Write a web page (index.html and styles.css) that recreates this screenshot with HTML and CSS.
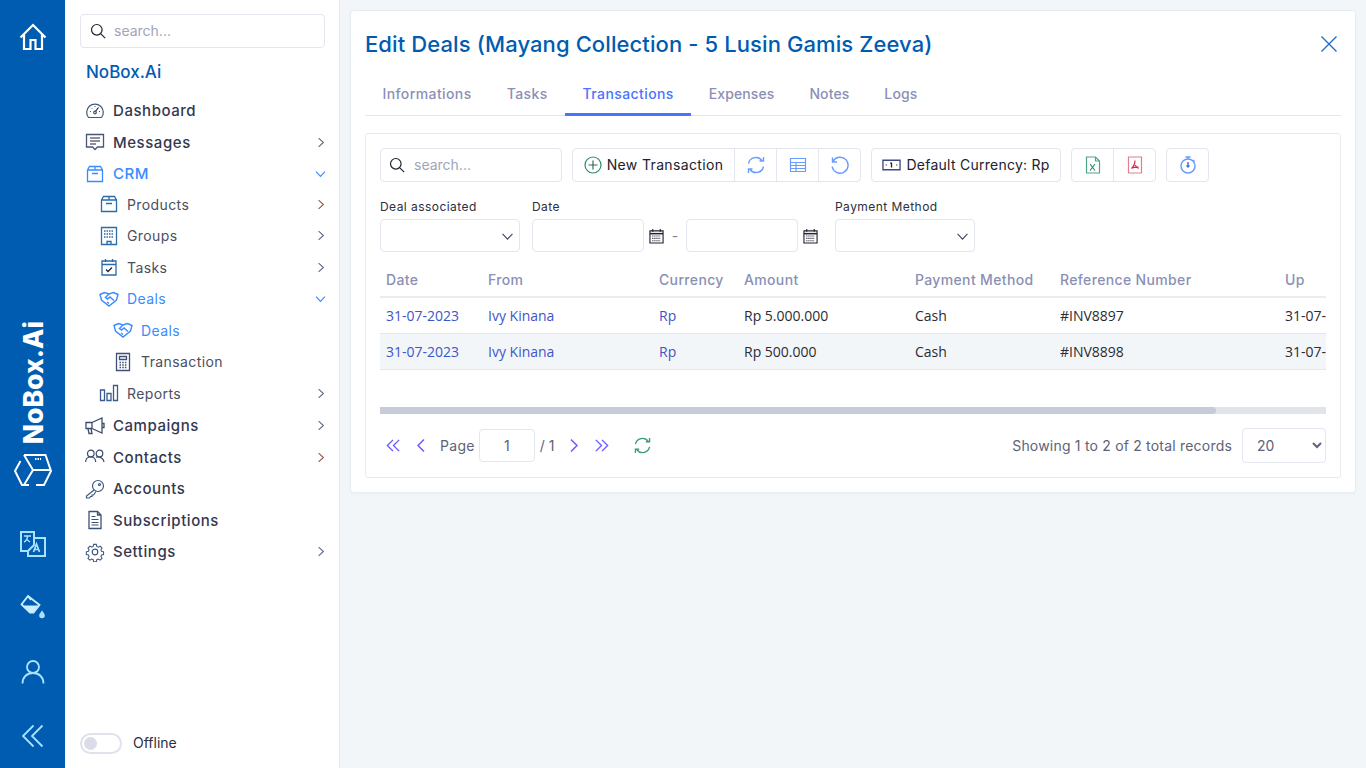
FILE: index.html
```html
<!DOCTYPE html>
<html>

<head>
	<meta charset="UTF-8">
	<title>Edit Deals - NoBox.Ai</title>
	<link rel="stylesheet" href="styles.css">
</head>

<body>

	<!-- blue rail -->
	<div class="rail">
		<svg class="rail-home" viewBox="0 0 30 30"><path d="M2.5 15.500 15 3l12.500 12.500M6 12.500V27h6.500v-9h5v9H24V12.500" fill="none" stroke="#fff" stroke-width="2.200"/></svg>
		<div class="rail-brand">NoBox.Ai</div>
		<svg class="rail-cube" viewBox="0 0 38 36" fill="none" stroke="#fff" stroke-width="2"><path d="M10 2h21.500L37 18l-7 14h-8M15 32H8L1 18l5.500-10"/><path d="M10 2l9 15h18M19 17l-9 15"/><path d="M21 6h6" stroke-dasharray="1.500 1"/></svg>
		<svg class="rail-icon rail-first" viewBox="0 0 26 26" fill="none" stroke="#a9e2ff" stroke-width="2"><path d="M1 1h13v13l-6 6H1z"/><path d="M15 7h10v18H8v-5"/><path d="M4 5h7M7.500 5c0 3-1.500 5-3.500 6M6 8l4 3" stroke-width="1.400"/><path d="M13.500 21l3-8 3 8M15 18.500h3" stroke-width="1.700"/></svg>
		<svg class="rail-icon" viewBox="0 0 26 26"><path d="M8 1 1.500 9.500l8.500 8h3.500l6-7.500z" fill="none" stroke="#c8eeff" stroke-width="1.800"/><path d="M3 10.500h15.500l-5.500 7H10z" fill="#c8eeff"/><path d="M8 1l3 4" stroke="#c8eeff" stroke-width="1.800"/><path d="M22 15.500c-1.500 2-2.800 3.500-2.800 5a2.800 2.800 0 0 0 5.600 0c0-1.500-1.300-3-2.800-5z" fill="#a9e2ff"/></svg>
		<svg class="rail-icon" viewBox="0 0 26 26" fill="none" stroke="#a9e2ff" stroke-width="1.800"><circle cx="13" cy="8" r="6"/><path d="M2.500 24.500c0-6 4-10.500 10.500-10.500s10.500 4.500 10.500 10.500"/></svg>
		<svg class="rail-icon" viewBox="0 0 26 26" fill="none" stroke="#a9e2ff" stroke-width="1.800"><path d="M13.500 2.500 3 13l10.500 10.500M22.500 2.500 12 13l10.500 10.500"/></svg>
	</div>

	<!-- menu -->
	<div class="side">
		<div class="side-search">
			<svg class="ic-search" viewBox="0 0 16 16" fill="none" stroke="#223" stroke-width="1.200"><circle cx="6.800" cy="6.800" r="5.300"/><path d="m10.800 10.800 4.400 4.400"/></svg>
			<span class="hint">search...</span>
		</div>
		<div class="brand">NoBox.Ai</div>

		<div class="nav">
			<div class="nav-row">
				<svg class="nav-ic" viewBox="0 0 20 20" fill="none" stroke="#3d5a80" stroke-width="1.200"><path d="M3.500 16.500a8.300 8.300 0 1 1 13 0z"/><path d="m10 11 3.500-4.500" stroke="#223"/><circle cx="10" cy="11.500" r="1.300"/><path d="M5 10.500h1M14 10.500h1M10 5v1M6.500 7l.7.700" stroke-width="1"/></svg>
				Dashboard
			</div>
			<div class="nav-row">
				<svg class="nav-ic" viewBox="0 0 20 20" fill="none" stroke="#4a5578" stroke-width="1.300"><path d="M1.500 2.500h17v12.500h-6l-2.500 2.500L7.500 15h-6z"/><path d="M5 6h10M5 9h10M5 12h6" stroke="#223" stroke-width="1.100"/></svg>
				Messages
				<svg class="chev" viewBox="0 0 10 14"><path d="m2 1.500 6 5.500-6 5.500"/></svg>
			</div>
			<div class="nav-row active">
				<svg class="nav-ic" viewBox="0 0 20 20" fill="none" stroke="#3a8bff" stroke-width="1.300"><path d="M2.500 6 4.500 2.500h11L17.500 6v11.500h-15zM2.500 6h15M7 9.500h6M10 2.500V6"/></svg>
				CRM
				<svg class="chev open" viewBox="0 0 14 10"><path d="m1.500 2 5.500 6 5.500-6"/></svg>
			</div>

			<div class="nav-sub">
				<div class="nav-row small">
					<svg class="nav-ic" viewBox="0 0 20 20" fill="none" stroke="#2a6ba8" stroke-width="1.300"><path d="M2.500 6 4.500 2.500h11L17.500 6v11.500h-15zM2.500 6h15M7 9.500h6M10 2.500V6"/></svg>
					Products
					<svg class="chev warm" viewBox="0 0 10 14"><path d="m2 1.500 6 5.500-6 5.500"/></svg>
				</div>
				<div class="nav-row small">
					<svg class="nav-ic" viewBox="0 0 20 20" fill="none" stroke="#2a6ba8" stroke-width="1.300"><path d="M2.500 1.500h15v17h-15zM8 18.500v-3h4v3"/><path d="M5 5h10M5 8h10M5 11h10" stroke-width="1.500" stroke-dasharray="1.500 1"/></svg>
					Groups
					<svg class="chev" viewBox="0 0 10 14"><path d="m2 1.500 6 5.500-6 5.500"/></svg>
				</div>
				<div class="nav-row small">
					<svg class="nav-ic" viewBox="0 0 20 20" fill="none" stroke="#2a6ba8" stroke-width="1.300"><path d="M3 4h14v14H3zM3 7.500h14M6.500 2v3M13.500 2v3"/><path d="m7 12.500 2 2 4-4" stroke="#223"/></svg>
					Tasks
					<svg class="chev" viewBox="0 0 10 14"><path d="m2 1.500 6 5.500-6 5.500"/></svg>
				</div>
				<div class="nav-row small active">
					<svg class="nav-ic wide" viewBox="0 0 20 20" fill="none" stroke="#3a8bff" stroke-width="1.400"><path d="M1 5.500 5.500 3.500 10 5l4.500-1.500L19 5.500l-1.500 5.500L10 17 2.500 11z"/><path d="M10 5 6.500 8.500l2 1.500 2.500-2 4 3.500M8 13l2 1.500"/></svg>
					Deals
					<svg class="chev open" viewBox="0 0 14 10"><path d="m1.500 2 5.500 6 5.500-6"/></svg>
				</div>

				<div class="nav-sub">
					<div class="nav-row small active">
						<svg class="nav-ic wide" viewBox="0 0 20 20" fill="none" stroke="#3a8bff" stroke-width="1.400"><path d="M1 5.500 5.500 3.500 10 5l4.500-1.500L19 5.500l-1.500 5.500L10 17 2.500 11z"/><path d="M10 5 6.500 8.500l2 1.500 2.500-2 4 3.500M8 13l2 1.500"/></svg>
						Deals
					</div>
					<div class="nav-row small">
						<svg class="nav-ic" viewBox="0 0 20 20" fill="none" stroke="#3f4f78" stroke-width="1.300"><path d="M3.500 1.500h13v17h-13z"/><path d="M6.500 4.500h7v3h-7z"/><path d="M6.500 10.500h7M6.500 13h7M6.500 15.500h7" stroke-width="1.500" stroke-dasharray="1.500 1.200"/></svg>
						Transaction
					</div>
				</div>

				<div class="nav-row small">
					<svg class="nav-ic" viewBox="0 0 20 20" fill="none" stroke="#3a5a90" stroke-width="1.300"><path d="M1.500 7h4v10.500h-4zM8 10.500h4v7H8zM14.500 2.500h4v15h-4z"/></svg>
					Reports
					<svg class="chev" viewBox="0 0 10 14"><path d="m2 1.500 6 5.500-6 5.500"/></svg>
				</div>
			</div>

			<div class="nav-row">
				<svg class="nav-ic" viewBox="0 0 20 20" fill="none" stroke="#3d4d6e" stroke-width="1.300"><path d="M1 6.500h6v6H1zM7 6.500 17 2v15L7 12.500M3 12.500l1 5h3l-1-5M17 7.500h2v4h-2"/></svg>
				Campaigns
				<svg class="chev" viewBox="0 0 10 14"><path d="m2 1.500 6 5.500-6 5.500"/></svg>
			</div>
			<div class="nav-row">
				<svg class="nav-ic" viewBox="0 0 20 20" fill="none" stroke="#3d4d6e" stroke-width="1.200"><circle cx="5.800" cy="6.500" r="3.300"/><circle cx="14.500" cy="6.500" r="3.300"/><path d="M.7 15c0-3 2-5 5-5s5 2 5 5M11 10.200c3.800-.8 7.800 1 8 4.800"/></svg>
				Contacts
				<svg class="chev warm" viewBox="0 0 10 14"><path d="m2 1.500 6 5.500-6 5.500"/></svg>
			</div>
			<div class="nav-row">
				<svg class="nav-ic" viewBox="0 0 20 20" fill="none" stroke="#3d5a80" stroke-width="1.200"><circle cx="13" cy="7" r="5.500"/><path d="M9 11 1.500 17v2h3l1-1.500H7V16h1.500l2.500-3.500"/><circle cx="14.500" cy="5.500" r="1"/></svg>
				Accounts
			</div>
			<div class="nav-row">
				<svg class="nav-ic" viewBox="0 0 20 20" fill="none" stroke="#3f4f78" stroke-width="1.300"><path d="M4 1.500h8.500L16 5v13.500H4zM12.500 1.500V5H16"/><path d="M6.500 6.500h4M6.500 9.500h7M6.500 12.500h7M6.500 15h7" stroke-width="1.100"/></svg>
				Subscriptions
			</div>
			<div class="nav-row">
				<svg class="nav-ic" viewBox="0 0 20 20" fill="none" stroke="#3d5a80" stroke-width="1.200"><circle cx="10" cy="10" r="2.800"/><path d="m8.500 1.500h3l.5 2.300 1.700.8 2.100-1.200 2 2.200-1.200 2 .6 1.600 2.300.6v3l-2.300.6-.6 1.600 1.200 2-2.200 2.100-2-1.200-1.600.7-.5 2.300h-3l-.5-2.300-1.600-.7-2 1.200-2.200-2.100 1.200-2-.7-1.600-2.300-.6v-3l2.300-.6.7-1.600-1.200-2 2.200-2.200 2 1.200 1.600-.8z" transform="translate(1 1) scale(.9)"/></svg>
				Settings
				<svg class="chev" viewBox="0 0 10 14"><path d="m2 1.500 6 5.500-6 5.500"/></svg>
			</div>
		</div>

		<div class="offline">
			<span class="toggle"><i></i></span>
			<span class="hint">Offline</span>
		</div>
	</div>

	<!-- content -->
	<div class="main">
		<div class="card">

			<div class="card-head">
				<h1>Edit Deals (Mayang Collection - 5 Lusin Gamis Zeeva)</h1>
				<svg class="close" viewBox="0 0 18 18"><path d="m1.500 1.500 15 15M16.500 1.500l-15 15"/></svg>
			</div>

			<div class="tabs">
				<a class="tab">Informations</a>
				<a class="tab">Tasks</a>
				<a class="tab on">Transactions</a>
				<a class="tab tight">Expenses</a>
				<a class="tab tight">Notes</a>
				<a class="tab tight">Logs</a>
			</div>

			<div class="panel">

				<div class="toolbar">
					<div class="box tb-search">
						<svg class="ic-search" viewBox="0 0 16 16" fill="none" stroke="#223" stroke-width="1.200"><circle cx="6.800" cy="6.800" r="5.300"/><path d="m10.800 10.800 4.400 4.400"/></svg>
						<span class="hint">search...</span>
					</div>

					<div class="box group">
						<div class="cell btn-new">
							<svg class="ic18" viewBox="0 0 18 18" fill="none" stroke="#2e8b6f" stroke-width="1.200"><circle cx="9" cy="9" r="8"/><path d="M9 4.500v9M4.500 9h9" stroke="#3a6b4f"/></svg>
							<span class="hint">New Transaction</span>
						</div>
						<div class="cell icon-cell">
							<svg class="ic18" viewBox="0 0 18 18" fill="none" stroke="#6a9cff" stroke-width="1.400"><path d="M1.500 7.500A7.600 7.600 0 0 1 15 4.500M16.500 1v4h-4M16.500 10.500A7.600 7.600 0 0 1 3 13.500M1.500 17v-4h4"/></svg>
						</div>
						<div class="cell icon-cell">
							<svg class="ic18" viewBox="0 0 18 18" fill="none" stroke="#6a9cff" stroke-width="1.200"><path d="M1.500 2.500h15v13h-15zM1.500 6.500h15M1.500 9.500h15M1.500 12.500h15M7 6.500v9"/></svg>
						</div>
						<div class="cell icon-cell">
							<svg class="ic18" viewBox="0 0 18 18" fill="none" stroke="#6a9cff" stroke-width="1.400"><path d="M1.500 1.500v4.500H6M2 5.500a8 8 0 1 1-.8 5"/></svg>
						</div>
					</div>

					<div class="box currency">
						<svg class="ic-cash" viewBox="0 0 20 12" fill="none" stroke="#3c4a80" stroke-width="1.400"><path d="M1 1h18v10H1z"/><path d="M10 3.500v5M8.800 4.500 10 3.500M4 6h.8M15.200 6h.8" stroke="#223"/></svg>
						<span class="hint">Default Currency: Rp</span>
					</div>

					<div class="box group">
						<div class="cell icon-cell">
							<svg class="ic18" viewBox="0 0 18 18" fill="none" stroke="#4aa58a" stroke-width="1.200"><path d="M2.500 1h9l4 4v12h-13zM11.500 1v4h4"/><path d="m6 8 5 6.500M11 8l-5 6.500" stroke="#2e8b6f"/></svg>
						</div>
						<div class="cell icon-cell">
							<svg class="ic18" viewBox="0 0 18 18" fill="none" stroke="#e0808f" stroke-width="1.200"><path d="M2.500 1h13v16h-13z"/><path d="M9 4.500c0 3-1.500 6-3.500 8M9 9c1 1.500 2 2.500 3.500 3.500M6 12c2-.8 4-1 6.500-.8" stroke="#d6284f"/></svg>
						</div>
					</div>

					<div class="box timer">
						<svg class="ic18" viewBox="0 0 18 18" fill="none" stroke="#6a9cff" stroke-width="1.500"><circle cx="9" cy="10" r="7"/><path d="M6.500 1h5M9 1v2M14 4l1.500 1.500"/><path d="M9 6v5M7.500 9.500 9 11l1.500-1.500" stroke="#4a74d0"/></svg>
					</div>
				</div>

				<div class="filters">
					<div class="field f-deal">
						<label>Deal associated</label>
						<div class="box pick">
							<svg class="pick-arrow" viewBox="0 0 14 10"><path d="m1.500 2 5.500 6 5.500-6"/></svg>
						</div>
					</div>
					<div class="field f-date">
						<label>Date</label>
						<div class="date-range">
							<div class="box date-in"></div>
							<svg class="ic-cal" viewBox="0 0 16 16" fill="none" stroke="#223" stroke-width="1.200"><path d="M1 2.500h14v13H1z"/><path d="M1 5.500h14" stroke-width="1.600"/><path d="M4 .5v3M12 .5v3"/><path d="M3.500 8h9M3.500 10.500h9M3.500 13h9" stroke-width="1.200" stroke-dasharray="1.200 1"/></svg>
							<span class="dash">-</span>
							<div class="box date-in"></div>
							<svg class="ic-cal" viewBox="0 0 16 16" fill="none" stroke="#223" stroke-width="1.200"><path d="M1 2.500h14v13H1z"/><path d="M1 5.500h14" stroke-width="1.600"/><path d="M4 .5v3M12 .5v3"/><path d="M3.500 8h9M3.500 10.500h9M3.500 13h9" stroke-width="1.200" stroke-dasharray="1.200 1"/></svg>
						</div>
					</div>
					<div class="field f-pay">
						<label>Payment Method</label>
						<div class="box pick">
							<svg class="pick-arrow" viewBox="0 0 14 10"><path d="m1.500 2 5.500 6 5.500-6"/></svg>
						</div>
					</div>
				</div>

				<div class="table-wrap">
					<table class="grid">
						<colgroup>
							<col class="c1"><col class="c2"><col class="c3"><col class="c4"><col class="c5"><col class="c6"><col class="c7">
						</colgroup>
						<tr>
							<th>Date</th>
							<th>From</th>
							<th>Currency</th>
							<th>Amount</th>
							<th>Payment Method</th>
							<th>Reference Number</th>
							<th>Up</th>
						</tr>
						<tr>
							<td class="link">31-07-2023</td>
							<td class="link">Ivy Kinana</td>
							<td class="link">Rp</td>
							<td>Rp 5.000.000</td>
							<td>Cash</td>
							<td>#INV8897</td>
							<td>31-07-</td>
						</tr>
						<tr class="alt">
							<td class="link">31-07-2023</td>
							<td class="link">Ivy Kinana</td>
							<td class="link">Rp</td>
							<td>Rp 500.000</td>
							<td>Cash</td>
							<td>#INV8898</td>
							<td>31-07-</td>
						</tr>
					</table>
				</div>

				<div class="scroll"><div class="scroll-thumb"></div></div>

				<div class="pager">
					<svg class="pg" viewBox="0 0 16 14"><path d="M7.500 1 1.500 7l6 6M14 1 8 7l6 6"/></svg>
					<svg class="pg one" viewBox="0 0 10 14"><path d="M8 1 2 7l6 6"/></svg>
					<span class="pg-label">Page</span>
					<div class="box pg-input">1</div>
					<span class="pg-total">/ 1</span>
					<svg class="pg one" viewBox="0 0 10 14"><path d="m2 1 6 6-6 6"/></svg>
					<svg class="pg last" viewBox="0 0 16 14"><path d="m2 1 6 6-6 6M8.500 1l6 6-6 6"/></svg>
					<svg class="pg-reload" viewBox="0 0 18 18" fill="none" stroke="#3a9b7a" stroke-width="1.400"><path d="M1.500 7.500A7.600 7.600 0 0 1 15 4.500M16.500 1v4h-4M16.500 10.500A7.600 7.600 0 0 1 3 13.500M1.500 17v-4h4"/></svg>
					<span class="pg-info">Showing 1 to 2 of 2 total records</span>
					<select class="pg-size">
						<option>20</option>
						<option>50</option>
						<option>100</option>
					</select>
				</div>

			</div>
		</div>
	</div>

</body>

</html>
```

FILE: styles.css
```css
* { box-sizing: border-box; }

body {
	margin: 0;
	height: 100vh;
	overflow: hidden;
	display: flex;
	background-color: #f3f6f9;
	font-family: Inter, "Noto Sans", sans-serif;
	font-size: 14px;
	color: #3f4254;
}

.hint { padding-bottom: 2px; }

/* rail */
.rail {
	width: 65px;
	flex-shrink: 0;
	background-color: #005cb0;
	display: flex;
	flex-direction: column;
	align-items: center;
	padding: 22px 0 19px;
}
.rail-home { width: 30px; height: 30px; }
.rail-brand {
	margin-top: auto;
	writing-mode: vertical-rl;
	transform: rotate(180deg);
	font-size: 26.500px;
	font-weight: 800;
	line-height: 30px;
	color: #fff;
}
.rail-cube { width: 38px; height: 36px; margin-top: 9px; }
.rail-icon { width: 26px; height: 26px; margin-top: 38px; }
.rail-first { margin-top: 42px; }

/* menu */
.side {
	width: 275px;
	flex-shrink: 0;
	background-color: #fff;
	border-right: 1px solid #e6e9ef;
	padding: 14px 14px 14px 15px;
	display: flex;
	flex-direction: column;
}
.side-search {
	height: 34px;
	border: 1px solid #e4e6ef;
	border-radius: 4px;
	display: flex;
	align-items: center;
	padding-left: 9px;
	gap: 8px;
	color: #a1a5b7;
}
.ic-search { width: 16px; height: 16px; }
.brand {
	margin: 14px 0 0 6px;
	height: 20px;
	line-height: 20px;
	font-size: 17px;
	font-weight: 500;
	color: #005cb0;
}
.nav { margin-top: 13px; }
.nav-row {
	height: 31.5px;
	display: flex;
	align-items: center;
	gap: 8px;
	padding-left: 5px;
	font-size: 15px;
	font-weight: 450;
	letter-spacing: .55px;
	color: #33384f;
}
.nav-row.small {
	padding-bottom: 2px;
	font-size: 14px;
	font-weight: 400;
	letter-spacing: .4px;
	color: #4a4f63;
}
.nav-row.active { color: #3a8bff; }
.nav-sub { padding-left: 14px; }
.nav-ic { width: 20px; height: 20px; flex-shrink: 0; }
.chev {
	width: 8px;
	height: 13px;
	margin-left: auto;
	fill: none;
	stroke: #5f6b85;
	stroke-width: 1.400;
}
.chev.warm { stroke: #8a5f50; }
.chev.open {
	width: 13px;
	height: 8px;
	margin-right: -2px;
	stroke: #3a8bff;
}
.offline {
	margin-top: auto;
	display: flex;
	align-items: center;
	gap: 11px;
	color: #2b2f40;
}
.toggle {
	width: 42px;
	height: 21px;
	border: 2px solid #dfe2ec;
	border-radius: 11px;
	padding: 2px 0 0 2px;
}
.toggle i {
	display: block;
	width: 13px;
	height: 13px;
	border-radius: 50%;
	background-color: #dadde9;
}

/* content */
.main {
	flex: 1;
	padding: 10px 10px 0 10px;
}
.card {
	background-color: #fff;
	border: 1px solid #e9ecf1;
	border-radius: 4px;
	padding: 0 14px 14px;
	box-shadow: 0 1px 3px rgba(0, 0, 0, .03);
}
.card-head {
	height: 66px;
	display: flex;
	align-items: center;
	justify-content: space-between;
}
h1 {
	margin: 0;
	font-size: 22px;
	font-weight: 500;
	letter-spacing: .1px;
	color: #005cb0;
}
.close {
	width: 18px;
	height: 18px;
	margin-right: 3px;
	fill: none;
	stroke: #1f6fc4;
	stroke-width: 1.400;
}
.tabs {
	display: flex;
	height: 39px;
	border-bottom: 1px solid #e4e6ef;
}
.tab {
	height: 39px;
	padding: 0 17.5px;
	line-height: 33px;
	font-weight: 500;
	letter-spacing: .4px;
	color: #8a90b5;
	border-bottom: 2px solid transparent;
}
.tab.tight { letter-spacing: .1px; }
.tab.on {
	color: #4a74ff;
	border-bottom: 3px solid #4a74ff;
}

.panel {
	margin-top: 17px;
	border: 1px solid #e8ebf0;
	border-radius: 3px;
	padding: 14px 14px 14px;
}
.toolbar {
	display: flex;
	gap: 10px;
}
.box {
	border: 1px solid #e4e6ef;
	border-radius: 4px;
	background-color: #fff;
}
.toolbar .box {
	height: 34px;
	display: flex;
	align-items: center;
}
.tb-search {
	width: 182px;
	padding-left: 8px;
	gap: 9px;
	color: #a1a5b7;
}
.group { overflow: hidden; }
.cell {
	height: 100%;
	display: flex;
	align-items: center;
	justify-content: center;
	border-right: 1px solid #e4e6ef;
}
.cell:last-child { border-right: 0; }
.btn-new {
	width: 162px;
	gap: 5px;
	letter-spacing: .35px;
	color: #20222c;
}
.icon-cell { width: 42px; }
.icon-cell:last-child { width: 41px; }
.ic18 { width: 18px; height: 18px; }
.currency {
	width: 190px;
	justify-content: center;
	gap: 5px;
	letter-spacing: .25px;
	color: #20222c;
}
.ic-cash { width: 19px; height: 12px; }
.toolbar .timer { width: 43px; justify-content: center; }

.filters {
	display: flex;
	margin-top: 16px;
}
.field label {
	display: block;
	height: 21px;
	line-height: 17px;
	font-size: 12px;
	letter-spacing: .45px;
	color: #2b2f40;
}
.f-deal { width: 152px; }
.f-date { width: 303px; }
.pick {
	position: relative;
	height: 33px;
	width: 140px;
}
.pick-arrow {
	position: absolute;
	right: 5px;
	top: 12px;
	width: 13px;
	height: 9px;
	fill: none;
	stroke: #444a5e;
	stroke-width: 1.300;
}
.date-range {
	display: flex;
	align-items: center;
}
.date-in { width: 112px; height: 33px; }
.ic-cal { width: 15px; height: 16px; margin-left: 5px; }
.dash {
	width: 22px;
	text-align: center;
	color: #7e8299;
}

.table-wrap {
	margin-top: 11px;
	width: 946px;
	overflow: hidden;
}
.grid {
	width: 946px;
	table-layout: fixed;
	border-collapse: collapse;
}
.c1 { width: 102px; }
.c2 { width: 171px; }
.c3 { width: 85px; }
.c4 { width: 171px; }
.c5 { width: 145px; }
.c6 { width: 225px; }
.c7 { width: 47px; }
.grid th {
	height: 34px;
	padding: 0 6px;
	text-align: left;
	font-weight: 500;
	letter-spacing: .35px;
	color: #8a90b5;
	white-space: nowrap;
	border-bottom: 2px solid #e9ecf1;
}
.grid td {
	height: 36px;
	padding: 0 6px;
	font-family: "Open Sans", sans-serif;
	font-size: 14px;
	color: #2b2b33;
	white-space: nowrap;
	border-bottom: 1px solid #e4e7ee;
}
.grid td.link { color: #3f55c8; }
.alt td { background-color: #f3f6f9; }

.scroll {
	width: 946px;
	height: 7px;
	margin-top: 37px;
	background-color: #e1e5eb;
}
.scroll-thumb {
	width: 88.4%;
	height: 100%;
	border-radius: 0 4px 4px 0;
	background-color: #c6ccd7;
}

.pager {
	display: flex;
	align-items: center;
	margin-top: 14px;
	width: 946px;
	height: 35px;
	color: #5e6278;
}
.pg {
	width: 15px;
	height: 15px;
	margin-left: 6px;
	fill: none;
	stroke: #6a5cff;
	stroke-width: 1.500;
}
.pg.one { width: 10px; margin-left: 15px; margin-right: 1px; }
.pg.last { margin-left: 14px; }
.pg-label { margin-left: 13px; letter-spacing: .3px; padding-bottom: 0; }
.pg-input {
	width: 56px;
	height: 33px;
	margin-left: 4px;
	text-align: center;
	line-height: 31px;
}
.pg-total { margin-left: 5px; }
.pg-reload { width: 17px; height: 17px; margin-left: 25px; }
.pg-info { margin-left: auto; margin-right: 10px; letter-spacing: .2px; }
.pg-size {
	width: 84px;
	height: 35px;
	padding-left: 10px;
	border: 1px solid #e4e6ef;
	border-radius: 4px;
	background-color: #fff;
	font-family: Inter, "Noto Sans", sans-serif;
	font-size: 14px;
	color: #5e6278;
}
```
